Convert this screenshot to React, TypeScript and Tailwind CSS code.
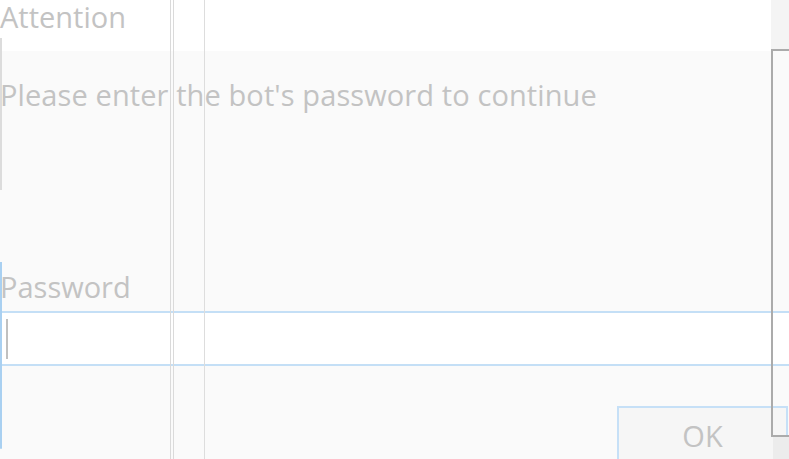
export default function App() {
  return (
    <div
      className="relative h-[459px] w-[789px] overflow-hidden bg-[#fafafa] text-[#c3c3c3]"
      style={{ fontFamily: '"Open Sans", "Noto Sans", sans-serif' }}
    >
      {/* title strip */}
      <div className="flex h-[51px]">
        <div className="flex-1 bg-white">
          <h1 className="text-[29px] leading-[34px] font-normal">Attention</h1>
        </div>
        <div className="w-[18px] bg-[#f4f4f4]" />
      </div>

      {/* message */}
      <p className="pt-[27px] text-[29px] leading-[34px] tracking-[0.1px]">Please enter the bot's password to continue</p>

      {/* password field */}
      <div className="pt-[158px]">
        <label className="block text-[29px] leading-[34px]">Password</label>
        <div className="mt-[7px] bg-[#c4dff6] py-[2px]">
          <div className="flex h-[51px] items-center bg-white pl-[6px]">
            <span className="h-[40px] w-[2px] bg-[#c0c0c0]" />
          </div>
        </div>
      </div>

      {/* buttons */}
      <div className="flex justify-end pt-[40px] pr-[1px]">
        <button className="flex h-[60px] w-[171px] items-start justify-center border-2 border-[#c6e0f7] bg-[#f6f6f6] pt-[11px] text-[29px] leading-[34px] text-[#c3c3c3]">
          OK
        </button>
      </div>

      {/* overlapping window edges */}
      <div className="absolute left-0 top-[38px] h-[152px] w-[2px] bg-[#dcdcdc]" />
      <div className="absolute left-0 top-[262px] h-[187px] w-[2px] rounded-b-sm bg-[#a9d0f1]" />
      <div className="absolute left-[170px] top-0 h-full w-[1px] bg-[#dadada]" />
      <div className="absolute left-[173px] top-0 h-full w-[1px] bg-[#dadada]" />
      <div className="absolute left-[204px] top-0 h-full w-[1px] bg-[#dddddd]" />
      <div className="absolute left-[771px] top-[49px] h-[388px] w-[30px] border-2 border-[#ababab]" />
      <div className="absolute left-[773px] top-[437px] h-[30px] w-[20px] bg-[#ececec]" />
    </div>
  );
}
